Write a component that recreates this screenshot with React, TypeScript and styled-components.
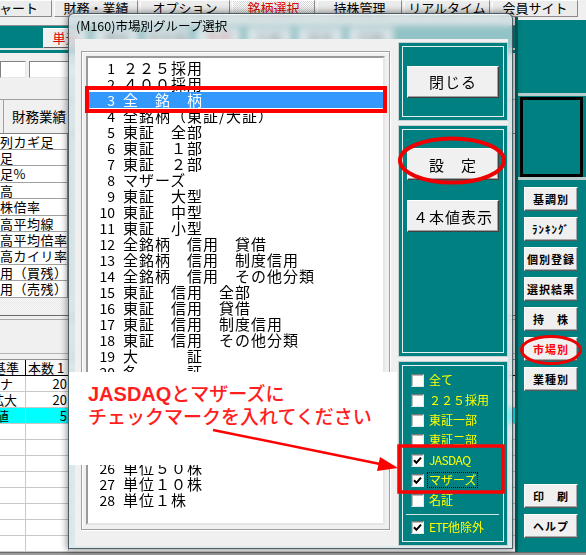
import styled, { createGlobalStyle } from "styled-components";

const JP = `"Noto Sans CJK JP", "Noto Sans", sans-serif`;

const GlobalStyle = createGlobalStyle`
  html, body { margin: 0; padding: 0; }
  body { background: #f0f0f0; font-family: ${JP}; }
  * { box-sizing: border-box; }
`;

const tabs = [
  { label: "チャート", w: 80 },
  { label: "財務・業績", w: 84 },
  { label: "オプション", w: 90 },
  { label: "銘柄選択", w: 83, active: true },
  { label: "持株管理", w: 85 },
  { label: "リアルタイム", w: 86 },
  { label: "会員サイト", w: 86 },
];

const toolButtons = [
  { label: "単元", red: true },
  { label: "連結" },
  { label: "四半期" },
  { label: "予想", red: true },
  { label: "比較" },
  { label: "設定" },
  { label: "印刷" },
];

const indexRows = ["列カギ足", "足", "足%", "高", "株倍率", "高平均線", "高平均倍率", "高カイリ率", "用（買残）", "用（売残）"];

const paramRows = [
  { name: "ナ", shift: 0, value: "20" },
  { name: "拡大", shift: -9, value: "20" },
  { name: "値", shift: -4, value: "5", hl: true },
  ...Array.from({ length: 8 }, () => ({ name: "", shift: 0, value: "" })),
];

const sideButtons = [
  { label: "基調別" },
  { label: "ﾗﾝｷﾝｸﾞ" },
  { label: "個別登録" },
  { label: "選択結果" },
  { label: "持　株" },
  { label: "市場別", red: true },
  { label: "業種別" },
];

const markets = [
  "２２５採用", "４００採用", "全　銘　柄", "全銘柄（東証/大証）", "東証　全部", "東証　１部", "東証　２部",
  "マザーズ", "東証　大型", "東証　中型", "東証　小型", "全銘柄　信用　貸借", "全銘柄　信用　制度信用",
  "全銘柄　信用　その他分類", "東証　信用　全部", "東証　信用　貸借", "東証　信用　制度信用",
  "東証　信用　その他分類", "大　　　証", "名　　　証", "福　　　証", "札　　　証", "ＪＡＳＤＡＱ",
  "単位１０００株", "単位１００株", "単位５０株", "単位１０株", "単位１株",
];

const checks = [
  { label: "全て" },
  { label: "２２５採用" },
  { label: "東証一部" },
  { label: "東証二部" },
  { label: "JASDAQ", checked: true, latin: true },
  { label: "マザーズ", checked: true, focus: true },
  { label: "名証" },
];

const Screen = styled.div`
  position: relative;
  width: 586px;
  height: 555px;
  overflow: hidden;
  display: flex;
  flex-direction: column;
  background: #f0f0f0;
`;

const TabBar = styled.div`
  display: flex;
  gap: 2px;
  height: 17px;
  flex-shrink: 0;
`;

const Tab = styled.div<{ $w: number; $first?: boolean; $active?: boolean }>`
  flex: 0 0 ${(p) => p.$w}px;
  margin-left: ${(p) => (p.$first ? "-28px" : "0")};
  height: 17px;
  border: 1px solid;
  border-color: #fcfcfc #8a8a8a #8a8a8a #fcfcfc;
  background: ${(p) =>
    p.$active ? "repeating-conic-gradient(#ffffff 0 25%, #d6d6d6 0 50%) 0 0 / 2px 2px" : "#ececec"};
  color: ${(p) => (p.$active ? "#e00000" : "#000")};
  font-size: 13px;
  line-height: 14px;
  text-align: center;
  white-space: nowrap;
  overflow: hidden;
`;

const Body = styled.div`
  display: flex;
  flex: 1;
  min-height: 0;
`;

const MainArea = styled.div`
  width: 515px;
  display: flex;
  flex-direction: column;
  overflow: hidden;
`;

const TopGap = styled.div`
  height: 9px;
  border-bottom: 1px solid #8c8c8c;
`;

const Toolbar = styled.div`
  height: 22px;
  background: #008080;
  display: flex;
  gap: 6px;
  padding: 2px 0 0 43px;
`;

const ToolButton = styled.div<{ $red?: boolean }>`
  width: 45px;
  height: 20px;
  background: #f0f0f0;
  border: 1px solid;
  border-color: #fff #606060 #606060 #fff;
  color: ${(p) => (p.$red ? "#e00000" : "#000")};
  font-size: 13px;
  line-height: 18px;
  text-align: center;
  white-space: nowrap;
  overflow: hidden;
`;

const ToolStrip = styled.div`
  height: 5px;
  border-top: 2px solid #e4e4e4;
  background: #008080;
`;

const FormRow = styled.div`
  height: 47px;
  display: flex;
  gap: 3px;
  padding-top: 8px;
`;

const Field = styled.div<{ $w: number }>`
  width: ${(p) => p.$w}px;
  height: 17px;
  background: #fff;
  border: 1px solid;
  border-color: #808080 #e8e8e8 #e8e8e8 #808080;
`;

const SectionHead = styled.div`
  height: 36px;
  border-top: 1px solid #a0a0a0;
  border-bottom: 1px solid #808080;
  padding-left: 3px;
  display: flex;
`;

const HeadTab = styled.div`
  display: flex;
  align-items: center;
  padding: 0 10px 0 8px;
  border-left: 1px solid #a0a0a0;
  font-size: 13.5px;
  color: #000;
`;

const IndexTable = styled.div`
  width: 68px;
  border-right: 1px solid #909090;
  background: #fff;
`;

const IndexRow = styled.div`
  height: 16.4px;
  border-bottom: 1px solid #a0a0a0;
  font-size: 13px;
  line-height: 15px;
  letter-spacing: 0.5px;
  white-space: nowrap;
  overflow: hidden;
  color: #000;
`;

const Hatch = styled.div`
  height: 18px;
  background: repeating-conic-gradient(#f6f6f6 0 25%, #ebebeb 0 50%) 0 0 / 2px 2px;
`;

const Splitter = styled.div`
  height: 39px;
  border-top: 1px solid #6a6a6a;
  box-shadow: inset 0 3px 0 0 #f0f0f0, inset 0 4px 0 0 #a8a8a8;
`;

const ParamTable = styled.div`
  border-top: 1px solid #b4b4b4;
  padding-top: 5px;
`;

const ParamRow = styled.div<{ $head?: boolean; $hl?: boolean }>`
  display: flex;
  height: ${(p) => (p.$head ? 17 : 16)}px;
  border-top: ${(p) => (p.$head ? "1px solid #909090" : "0")};
  border-bottom: 1px solid ${(p) => (p.$head ? "#000" : "#c8c8c8")};
  background: ${(p) => (p.$hl ? "#00ffff" : p.$head ? "#f8f8f8" : "#fff")};
`;

const ParamCell = styled.div<{ $w: number; $head?: boolean; $right?: boolean }>`
  flex: 0 0 ${(p) => p.$w}px;
  display: flex;
  align-items: center;
  justify-content: ${(p) => (p.$right ? "flex-end" : "flex-start")};
  padding: 0 ${(p) => (p.$right ? 1 : 0)}px 0 ${(p) => (p.$head && !p.$right ? 2 : 0)}px;
  border-right: 1px solid ${(p) => (p.$head ? "#000" : "#c8c8c8")};
  overflow: hidden;
  white-space: nowrap;
  font-size: 13px;
  line-height: 14px;
  color: #000;
`;

const Shift = styled.span<{ $x: number }>`
  margin-left: ${(p) => p.$x}px;
`;

const SideBar = styled.div`
  width: 71px;
  display: flex;
  flex-direction: column;
  background: #008080;
  border-left: 3px solid #005f5f;
`;

const SideTop = styled.div`
  height: 3px;
  background: #f0f0f0;
`;

const SideBlank = styled.div`
  height: 73px;
`;

const SideRule = styled.div`
  height: 3px;
  background: #b8cccc;
`;

const ChartBox = styled.div`
  height: 80px;
  margin: 1px 3px 0 2px;
  border: 3px solid #000;
`;

const ButtonStack = styled.div`
  flex: 1;
  display: flex;
  flex-direction: column;
  gap: 6px;
  padding: 7px 0 14px 6px;
`;

const SideButton = styled.div<{ $red?: boolean; $push?: boolean }>`
  width: 54px;
  height: 24px;
  margin-top: ${(p) => (p.$push ? "auto" : "0")};
  background: #f0f0f0;
  border: 1px solid;
  border-color: #ffffff #5a5a5a #5a5a5a #ffffff;
  box-shadow: inset -1px -1px 0 #a8a8a8;
  color: ${(p) => (p.$red ? "#ff0000" : "#000")};
  font-size: 11px;
  font-weight: 700;
  letter-spacing: 1px;
  display: flex;
  align-items: center;
  justify-content: center;
  white-space: nowrap;
`;

const StatusBand = styled.div`
  height: 3px;
  background: #9a9a9a;
  border-top: 1px solid #6a6a6a;
`;

const Dialog = styled.div`
  position: absolute;
  left: 68px;
  top: 13px;
  width: 445px;
  height: 536px;
  display: flex;
  flex-direction: column;
  padding: 0 4px 2px 6px;
  border: 1px solid rgba(30, 50, 60, 0.75);
  border-radius: 6px 6px 0 0;
  background: rgba(208, 224, 228, 0.7);
  backdrop-filter: blur(3px);
  box-shadow: 0 0 7px 1px rgba(0, 0, 0, 0.45), inset 0 1px 0 rgba(255, 255, 255, 0.7);
`;

const TitleBar = styled.div`
  height: 25px;
  display: flex;
  align-items: center;
  padding: 0 0 3px 1px;
  font-size: 12.5px;
  color: #000;
  white-space: nowrap;
`;

const DialogBody = styled.div`
  flex: 1;
  display: flex;
  gap: 1px;
  background: #f0f0f0;
  min-height: 0;
`;

const ListPane = styled.div`
  width: 322px;
  display: flex;
  padding: 12px 7px 16px 6px;
`;

const ListFrame = styled.div`
  flex: 1;
  display: flex;
  padding: 4px;
  border: 1px solid #a0a0a0;
  box-shadow: inset 1px 1px 0 #fff, 1px 1px 0 #fff;
`;

const ListBox = styled.div`
  flex: 1;
  background: #fff;
  border: 2px solid;
  border-color: #9a9a9a #e6e6e6 #e6e6e6 #9a9a9a;
  padding-top: 2px;
  overflow: hidden;
`;

const ListRow = styled.div<{ $selected?: boolean }>`
  height: 16px;
  display: flex;
  align-items: center;
  padding-left: 11px;
  background: ${(p) => (p.$selected ? "#3399ff" : "transparent")};
  color: ${(p) => (p.$selected ? "#fff" : "#000")};
  font-size: 15px;
  line-height: 16px;
  white-space: nowrap;
`;

const ListNum = styled.span`
  width: 16px;
  text-align: right;
  font-size: 14px;
`;

const ListText = styled.span`
  margin-left: 8px;
  letter-spacing: 1px;
`;

const RightPanes = styled.div`
  width: 110px;
  display: flex;
  flex-direction: column;
  gap: 4px;
  padding-top: 3px;
`;

const Panel = styled.div<{ $h?: number }>`
  ${(p) => (p.$h ? `height: ${p.$h}px;` : "flex: 1;")}
  display: flex;
  padding: 3px;
  background: #008080;
  border: 1px solid #c4d4d4;
`;

const PanelInner = styled.div<{ $center?: boolean }>`
  flex: 1;
  display: flex;
  flex-direction: column;
  align-items: center;
  justify-content: ${(p) => (p.$center ? "center" : "flex-start")};
  gap: 20px;
  padding-top: ${(p) => (p.$center ? 0 : 18)}px;
  border: 1px solid #e4f0f0;
`;

const CheckInner = styled.div`
  flex: 1;
  display: flex;
  flex-direction: column;
  padding: 4px 0 0 8px;
  border: 1px solid #e4f0f0;
`;

const DlgButton = styled.div`
  width: 92px;
  height: 32px;
  flex-shrink: 0;
  background: #f0f0f0;
  border: 1px solid;
  border-color: #ffffff #404040 #404040 #ffffff;
  box-shadow: inset -1px -1px 0 #a0a0a0;
  display: flex;
  align-items: center;
  justify-content: center;
  font-size: 15px;
  letter-spacing: 1px;
  color: #000;
  white-space: nowrap;
`;

const CheckRow = styled.div`
  height: 20px;
  display: flex;
  align-items: center;
  gap: 4px;
`;

const Box = styled.div`
  width: 13px;
  height: 13px;
  background: #fff;
  border: 1px solid;
  border-color: #7a7a7a #e8e8e8 #e8e8e8 #7a7a7a;
  box-shadow: inset 1px 1px 0 #bcbcbc;
  display: flex;
  align-items: center;
  justify-content: center;
`;

const CheckLabel = styled.span<{ $focus?: boolean; $latin?: boolean }>`
  color: #ffff00;
  font-size: 12px;
  line-height: 14px;
  padding: 0 1px;
  letter-spacing: ${(p) => (p.$latin ? "-0.6px" : "0")};
  outline: ${(p) => (p.$focus ? "1px dotted #000" : "none")};
  white-space: nowrap;
`;

const Narrow = styled.span`
  letter-spacing: -0.6px;
`;

const CheckRule = styled.div`
  height: 1px;
  width: 93px;
  margin: 4px 0 2px -5px;
  background: #d4e4e4;
`;

const Callout = styled.div`
  position: absolute;
  left: 69px;
  top: 372px;
  width: 328px;
  height: 93px;
  background: #fff;
  padding: 10px 0 0 19px;
  color: #ff1e1e;
  font-size: 19px;
  font-weight: 500;
  line-height: 22px;
  white-space: nowrap;
`;

const Latin = styled.span`
  font-family: "Liberation Sans", Arial, sans-serif;
  font-weight: 700;
  font-size: 20px;
`;

const Marks = styled.svg`
  position: absolute;
  left: 0;
  top: 0;
  pointer-events: none;
`;

function Tick() {
  return (
    <svg width="9" height="9" viewBox="0 0 9 9">
      <polyline points="1,4.2 3.4,6.8 8,1.6" fill="none" stroke="#000" strokeWidth="2" />
    </svg>
  );
}

export default function App() {
  return (
    <>
      <GlobalStyle />
      <Screen>
        <TabBar>
          {tabs.map((t, i) => (
            <Tab key={t.label} $w={t.w} $first={i === 0} $active={t.active}>
              {t.label}
            </Tab>
          ))}
        </TabBar>
        <Body>
          <MainArea>
            <TopGap />
            <Toolbar>
              {toolButtons.map((b) => (
                <ToolButton key={b.label} $red={b.red}>
                  {b.label}
                </ToolButton>
              ))}
            </Toolbar>
            <ToolStrip />
            <FormRow>
              <Field $w={26} />
              <Field $w={90} />
            </FormRow>
            <SectionHead>
              <HeadTab>財務業績</HeadTab>
            </SectionHead>
            <IndexTable>
              {indexRows.map((r) => (
                <IndexRow key={r}>{r}</IndexRow>
              ))}
            </IndexTable>
            <Hatch />
            <Splitter />
            <ParamTable>
              <ParamRow $head>
                <ParamCell $w={26} $head>
                  <Shift $x={-9}>基準</Shift>
                </ParamCell>
                <ParamCell $w={60} $head>
                  本数 1
                </ParamCell>
              </ParamRow>
              {paramRows.map((r, i) => (
                <ParamRow key={i} $hl={r.hl}>
                  <ParamCell $w={26}>
                    <Shift $x={r.shift}>{r.name}</Shift>
                  </ParamCell>
                  <ParamCell $w={43} $right>
                    {r.value}
                  </ParamCell>
                </ParamRow>
              ))}
            </ParamTable>
          </MainArea>
          <SideBar>
            <SideTop />
            <SideBlank />
            <SideRule />
            <ChartBox />
            <SideRule />
            <ButtonStack>
              {sideButtons.map((b) => (
                <SideButton key={b.label} $red={b.red}>
                  {b.label}
                </SideButton>
              ))}
              <SideButton $push>印　刷</SideButton>
              <SideButton>ヘルプ</SideButton>
            </ButtonStack>
          </SideBar>
        </Body>
        <StatusBand />

        <Dialog>
          <TitleBar>(M160)市場別グループ選択</TitleBar>
          <DialogBody>
            <ListPane>
              <ListFrame>
                <ListBox>
                  {markets.map((m, i) => (
                    <ListRow key={m} $selected={i === 2}>
                      <ListNum>{i + 1}</ListNum>
                      <ListText>{m}</ListText>
                    </ListRow>
                  ))}
                </ListBox>
              </ListFrame>
            </ListPane>
            <RightPanes>
              <Panel $h={79}>
                <PanelInner $center>
                  <DlgButton>閉じる</DlgButton>
                </PanelInner>
              </Panel>
              <Panel $h={232}>
                <PanelInner>
                  <DlgButton>設　定</DlgButton>
                  <DlgButton>４本値表示</DlgButton>
                </PanelInner>
              </Panel>
              <Panel>
                <CheckInner>
                  {checks.map((c) => (
                    <CheckRow key={c.label}>
                      <Box>{c.checked && <Tick />}</Box>
                      <CheckLabel $focus={c.focus} $latin={c.latin}>
                        {c.label}
                      </CheckLabel>
                    </CheckRow>
                  ))}
                  <CheckRule />
                  <CheckRow>
                    <Box>
                      <Tick />
                    </Box>
                    <CheckLabel>
                      <Narrow>ETF</Narrow>他除外
                    </CheckLabel>
                  </CheckRow>
                </CheckInner>
              </Panel>
            </RightPanes>
          </DialogBody>
        </Dialog>

        <Callout>
          <Latin>JASDAQ</Latin>とマザーズに
          <br />
          チェックマークを入れてください
        </Callout>

        <Marks width="586" height="555" viewBox="0 0 586 555">
          <rect x="87" y="88" width="298" height="23" fill="none" stroke="#ff0000" strokeWidth="4" />
          <ellipse cx="452" cy="160.5" rx="52" ry="22" fill="none" stroke="#ee0000" strokeWidth="4" />
          <rect x="399" y="446" width="104" height="46" fill="none" stroke="#ff0000" strokeWidth="3.5" />
          <ellipse cx="551" cy="350" rx="29.5" ry="13.5" fill="none" stroke="#ee0000" strokeWidth="3" />
          <line x1="213" y1="430" x2="380" y2="464" stroke="#ff0000" strokeWidth="2.5" />
          <polygon points="398,468 377,471 380,457" fill="#ff0000" />
        </Marks>
      </Screen>
    </>
  );
}
